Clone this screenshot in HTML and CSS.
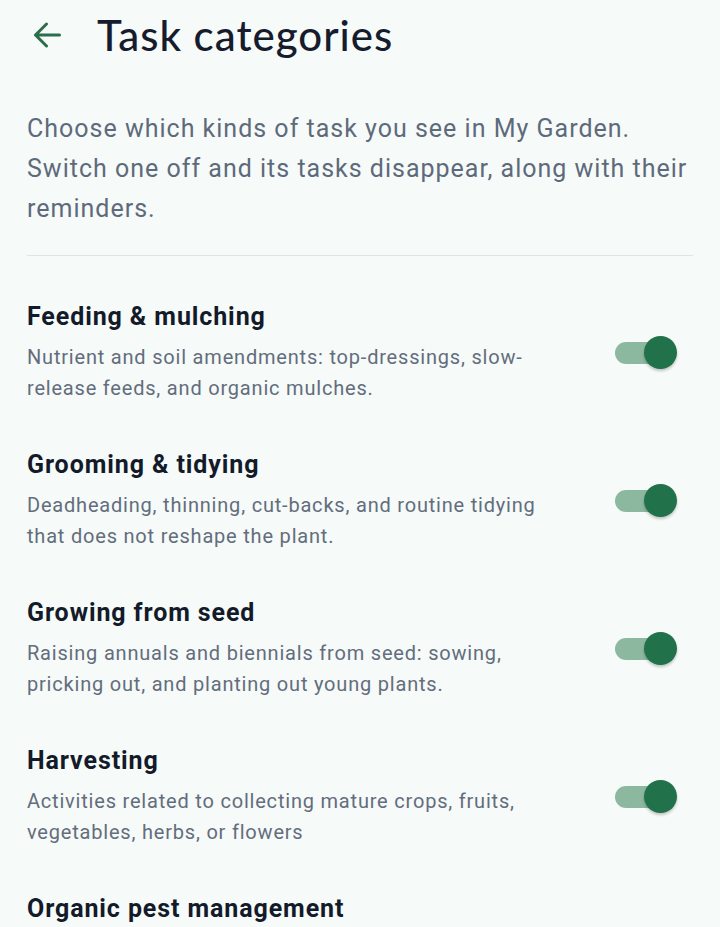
FILE: index.html
```html
<!DOCTYPE html>
<html lang="en">
<head>
<meta charset="utf-8">
<title>Task categories</title>
<link rel="stylesheet" href="styles.css">
</head>
<body>
<header class="topbar">
  <button class="back" aria-label="Back">
    <svg width="28" height="26" viewBox="0 0 28 26" fill="none" stroke="currentColor" stroke-width="3" stroke-linecap="round" stroke-linejoin="round"><path d="M26.5 13H2.5M13.5 2 2.5 13l11 11"/></svg>
  </button>
  <h1 class="title">Task categories</h1>
</header>
<main class="content">
  <p class="intro">Choose which kinds of task you see in My Garden. Switch one off and its tasks disappear, along with their reminders.</p>
  <hr class="divider">
  <ul class="list">
    <li class="item">
      <div class="text">
        <h2 class="name">Feeding &amp; mulching</h2>
        <p class="desc">Nutrient and soil amendments: top-dressings, slow-release feeds, and organic mulches.</p>
      </div>
      <span class="switch"><span class="track"></span><span class="thumb"></span></span>
    </li>
    <li class="item">
      <div class="text">
        <h2 class="name">Grooming &amp; tidying</h2>
        <p class="desc">Deadheading, thinning, cut-backs, and routine tidying that does not reshape the plant.</p>
      </div>
      <span class="switch"><span class="track"></span><span class="thumb"></span></span>
    </li>
    <li class="item">
      <div class="text">
        <h2 class="name">Growing from seed</h2>
        <p class="desc">Raising annuals and biennials from seed: sowing, pricking out, and planting out young plants.</p>
      </div>
      <span class="switch"><span class="track"></span><span class="thumb"></span></span>
    </li>
    <li class="item">
      <div class="text">
        <h2 class="name">Harvesting</h2>
        <p class="desc">Activities related to collecting mature crops, fruits, vegetables, herbs, or flowers</p>
      </div>
      <span class="switch"><span class="track"></span><span class="thumb"></span></span>
    </li>
    <li class="item">
      <div class="text">
        <h2 class="name">Organic pest management</h2>
        <p class="desc">Natural controls for pests and diseases: barriers, traps, companion planting, and beneficial insects.</p>
      </div>
      <span class="switch"><span class="track"></span><span class="thumb"></span></span>
    </li>
  </ul>
</main>
</body>
</html>
```

FILE: styles.css
```css
* { box-sizing: border-box; }

html, body {
  margin: 0;
  padding: 0;
  background: #f6faf8;
  font-family: Roboto, "Noto Sans", sans-serif;
  overflow: hidden;
}

.topbar {
  display: flex;
  align-items: center;
  height: 70px;
  padding-left: 32px;
}

.back {
  display: flex;
  align-items: center;
  justify-content: center;
  width: 30px;
  height: 30px;
  padding: 0;
  border: 0;
  background: none;
  color: #2b6e4c;
  margin-right: 35px;
}

.title {
  margin: 0;
  font-family: Lato, "Open Sans", sans-serif;
  font-weight: 500;
  font-size: 42px;
  letter-spacing: 1px;
  color: #161b2d;
}

.content {
  padding: 39px 27px 0 27px;
}

.intro {
  margin: 0;
  font-size: 25px;
  line-height: 40px;
  letter-spacing: 1px;
  color: #5e6a7b;
}

.divider {
  border: 0;
  height: 1px;
  background: #dfe4e4;
  margin: 26px 0 45px 0;
}

.list {
  list-style: none;
  margin: 0;
  padding: 0;
  display: flex;
  flex-direction: column;
  gap: 45px;
}

.item {
  display: flex;
  align-items: center;
  justify-content: space-between;
}

.text {
  width: 535px;
}

.name {
  margin: 0;
  font-size: 25px;
  line-height: 32px;
  font-weight: 700;
  letter-spacing: 0.9px;
  color: #131a2a;
}

.desc {
  margin: 9px 0 0 0;
  font-size: 20px;
  line-height: 31px;
  letter-spacing: 0.8px;
  color: #636d7d;
}

.switch {
  position: relative;
  width: 62px;
  height: 33px;
  margin-right: 16px;
  flex: none;
}

.track {
  position: absolute;
  left: 0;
  top: 5.5px;
  width: 56px;
  height: 22px;
  border-radius: 11px;
  background: #8db8a0;
}

.thumb {
  position: absolute;
  right: 0;
  top: 0;
  width: 33px;
  height: 33px;
  border-radius: 50%;
  background: #21714a;
  box-shadow: 0 2px 3px rgba(0, 0, 0, 0.22);
}
```
